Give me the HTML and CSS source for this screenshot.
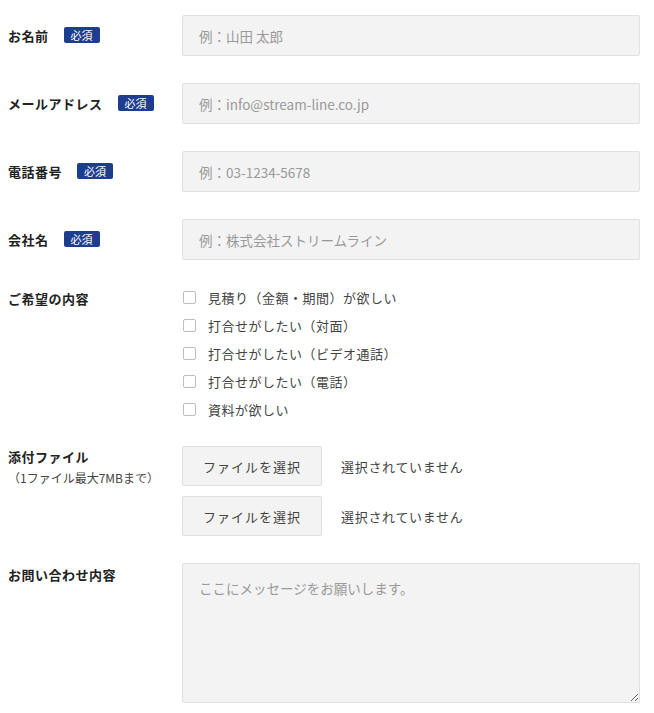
FILE: index.html
```html
<!DOCTYPE html>
<html lang="ja">
  <head>
    <meta charset="utf-8" />
    <title>お問い合わせ</title>
    <meta name="viewport" content="width=device-width, initial-scale=1" />
    <link rel="stylesheet" href="styles.css">
  </head>
  <body>
    <form class="contact-form">
      <div class="row row-center">
        <div class="label">お名前<span class="required">必須</span></div>
        <div class="field">
          <input type="text" class="text-input" placeholder="例：山田 太郎" />
        </div>
      </div>

      <div class="row row-center">
        <div class="label">メールアドレス<span class="required">必須</span></div>
        <div class="field">
          <input type="text" class="text-input" placeholder="例：info@stream-line.co.jp" />
        </div>
      </div>

      <div class="row row-center">
        <div class="label">電話番号<span class="required">必須</span></div>
        <div class="field">
          <input type="text" class="text-input" placeholder="例：03-1234-5678" />
        </div>
      </div>

      <div class="row row-center">
        <div class="label">会社名<span class="required">必須</span></div>
        <div class="field">
          <input type="text" class="text-input" placeholder="例：株式会社ストリームライン" />
        </div>
      </div>

      <div class="row">
        <div class="label label-check">ご希望の内容</div>
        <div class="field">
          <ul class="check-list">
            <li><span class="check-box"></span>見積り（金額・期間）が欲しい</li>
            <li><span class="check-box"></span>打合せがしたい（対面）</li>
            <li><span class="check-box"></span>打合せがしたい（ビデオ通話）</li>
            <li><span class="check-box"></span>打合せがしたい（電話）</li>
            <li><span class="check-box"></span>資料が欲しい</li>
          </ul>
        </div>
      </div>

      <div class="row">
        <div class="label label-file">
          添付ファイル
          <span class="note">（1ファイル最大7MBまで）</span>
        </div>
        <div class="field">
          <div class="file-line">
            <span class="file-button">ファイルを選択</span>
            <span class="file-name">選択されていません</span>
          </div>
          <div class="file-line">
            <span class="file-button">ファイルを選択</span>
            <span class="file-name">選択されていません</span>
          </div>
        </div>
      </div>

      <div class="row">
        <div class="label label-message">お問い合わせ内容</div>
        <div class="field">
          <textarea class="message" placeholder="ここにメッセージをお願いします。"></textarea>
        </div>
      </div>
    </form>
  </body>
</html>
```

FILE: styles.css
```css
body {
  margin: 0;
  padding: 15px 8px 0;
  font-family: "Noto Sans CJK JP", "Noto Sans", sans-serif;
  color: #222;
  background: #fff;
  overflow: hidden;
}

.contact-form {
  width: 632px;
}

.row {
  display: flex;
  align-items: flex-start;
  margin-bottom: 27px;
}

.row-center {
  align-items: center;
}

.label {
  width: 174px;
  flex-shrink: 0;
  font-size: 13px;
  font-weight: bold;
  line-height: 20px;
  letter-spacing: 0.5px;
}

.required {
  display: inline-block;
  margin-left: 15px;
  padding: 0 7px;
  background-color: #1d3d8f;
  color: #fff;
  font-size: 11px;
  font-weight: normal;
  line-height: 16px;
  letter-spacing: 0;
  border-radius: 2px;
  vertical-align: 1px;
}

.field {
  width: 458px;
}

.text-input,
.message {
  display: block;
  width: 100%;
  box-sizing: border-box;
  background-color: #f3f3f3;
  border: 1px solid #e0e0e0;
  border-radius: 2px;
  font-family: inherit;
  font-size: 13.5px;
  color: #333;
}

.text-input {
  height: 41px;
  padding: 0 16px;
}

.text-input::placeholder,
.message::placeholder {
  color: #999;
}

.label-check {
  padding-top: 2px;
}

.check-list {
  list-style: none;
  margin: -4px 0 -4px;
  padding: 0;
}

.check-list li {
  display: flex;
  align-items: center;
  height: 28px;
  font-size: 13px;
  letter-spacing: 0.5px;
  color: #444;
}

.check-box {
  width: 11px;
  height: 11px;
  margin-left: 1px;
  margin-right: 12px;
  border: 1px solid #bdbdbd;
  border-radius: 2px;
  background: #fff;
}

.label-file {
  padding-top: 1px;
}

.note {
  display: block;
  margin-top: 1px;
  font-size: 12px;
  font-weight: normal;
  letter-spacing: 0;
  color: #444;
}

.file-line {
  display: flex;
  align-items: center;
  margin-bottom: 10px;
}

.file-line:last-child {
  margin-bottom: 0;
}

.file-button {
  display: flex;
  align-items: center;
  justify-content: center;
  width: 140px;
  height: 40px;
  box-sizing: border-box;
  background-color: #f3f3f3;
  border: 1px solid #e0e0e0;
  border-radius: 2px;
  font-size: 13px;
  letter-spacing: 1px;
  color: #444;
}

.file-name {
  margin-left: 19px;
  font-size: 13px;
  letter-spacing: 0.7px;
  color: #444;
}

.label-message {
  padding-top: 2px;
}

.message {
  height: 140px;
  padding: 14px 16px;
  resize: vertical;
}
```
